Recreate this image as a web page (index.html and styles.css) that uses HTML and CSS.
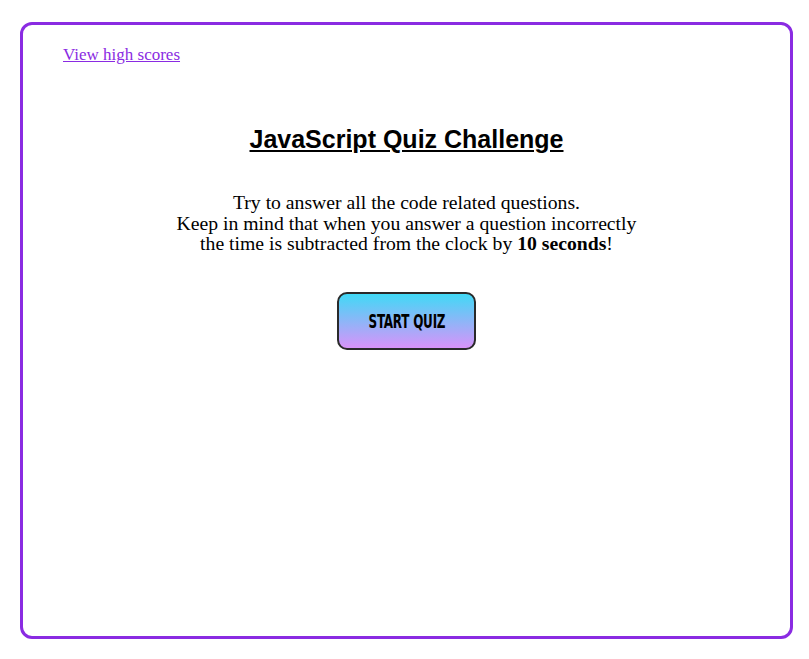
FILE: index.html
```html
<!DOCTYPE html>
<html lang="en">
<head>
<meta charset="utf-8">
<title>JavaScript Quiz Challenge</title>
<link rel="stylesheet" href="styles.css">
</head>
<body>
<main class="card">
  <nav class="top"><a class="scores" href="#">View high scores</a></nav>
  <section class="intro">
    <h1 class="title">JavaScript Quiz Challenge</h1>
    <p class="desc">Try to answer all the code related questions.<br>Keep in mind that when you answer a question incorrectly<br>the time is subtracted from the clock by <strong>10 seconds</strong>!</p>
    <button class="start" type="button"><span class="start-label">Start Quiz</span></button>
  </section>
</main>
</body>
</html>
```
FILE: styles.css
```css
html, body { margin: 0; background: #fff; }
body {
  padding: 22px 16px 20px 20px;
  font-family: "Liberation Serif", "DejaVu Serif", serif;
  color: #000;
}
.card {
  box-sizing: border-box;
  height: 617px;
  border: 3px solid #8a2be2;
  border-radius: 12px;
  padding: 20px 40px;
  display: flex;
  flex-direction: column;
}
.top { line-height: 20px; }
.scores {
  color: #8a2be2;
  font-size: 17px;
}
.intro {
  display: flex;
  flex-direction: column;
  align-items: center;
  text-align: center;
}
.title {
  margin: 60px 0 0;
  font-family: "Liberation Sans", Arial, sans-serif;
  font-weight: bold;
  font-size: 25px;
  line-height: 28px;
  text-decoration: underline;
}
.desc {
  margin: 39px 0 0;
  font-size: 19.7px;
  line-height: 20.5px;
}
.desc strong { font-weight: bold; }
.start {
  margin-top: 38px;
  width: 139px;
  height: 58px;
  border: 2px solid #2a2a2a;
  border-radius: 10px;
  background: linear-gradient(to bottom, #41d9f6, #d893f9);
  color: #000;
  padding: 0;
}
.start-label {
  display: inline-block;
  font-family: "DejaVu Sans Condensed", "DejaVu Sans", sans-serif;
  font-weight: bold;
  font-size: 19px;
  text-transform: uppercase;
  transform: scaleX(0.7);
  letter-spacing: -0.3px;
}
```
